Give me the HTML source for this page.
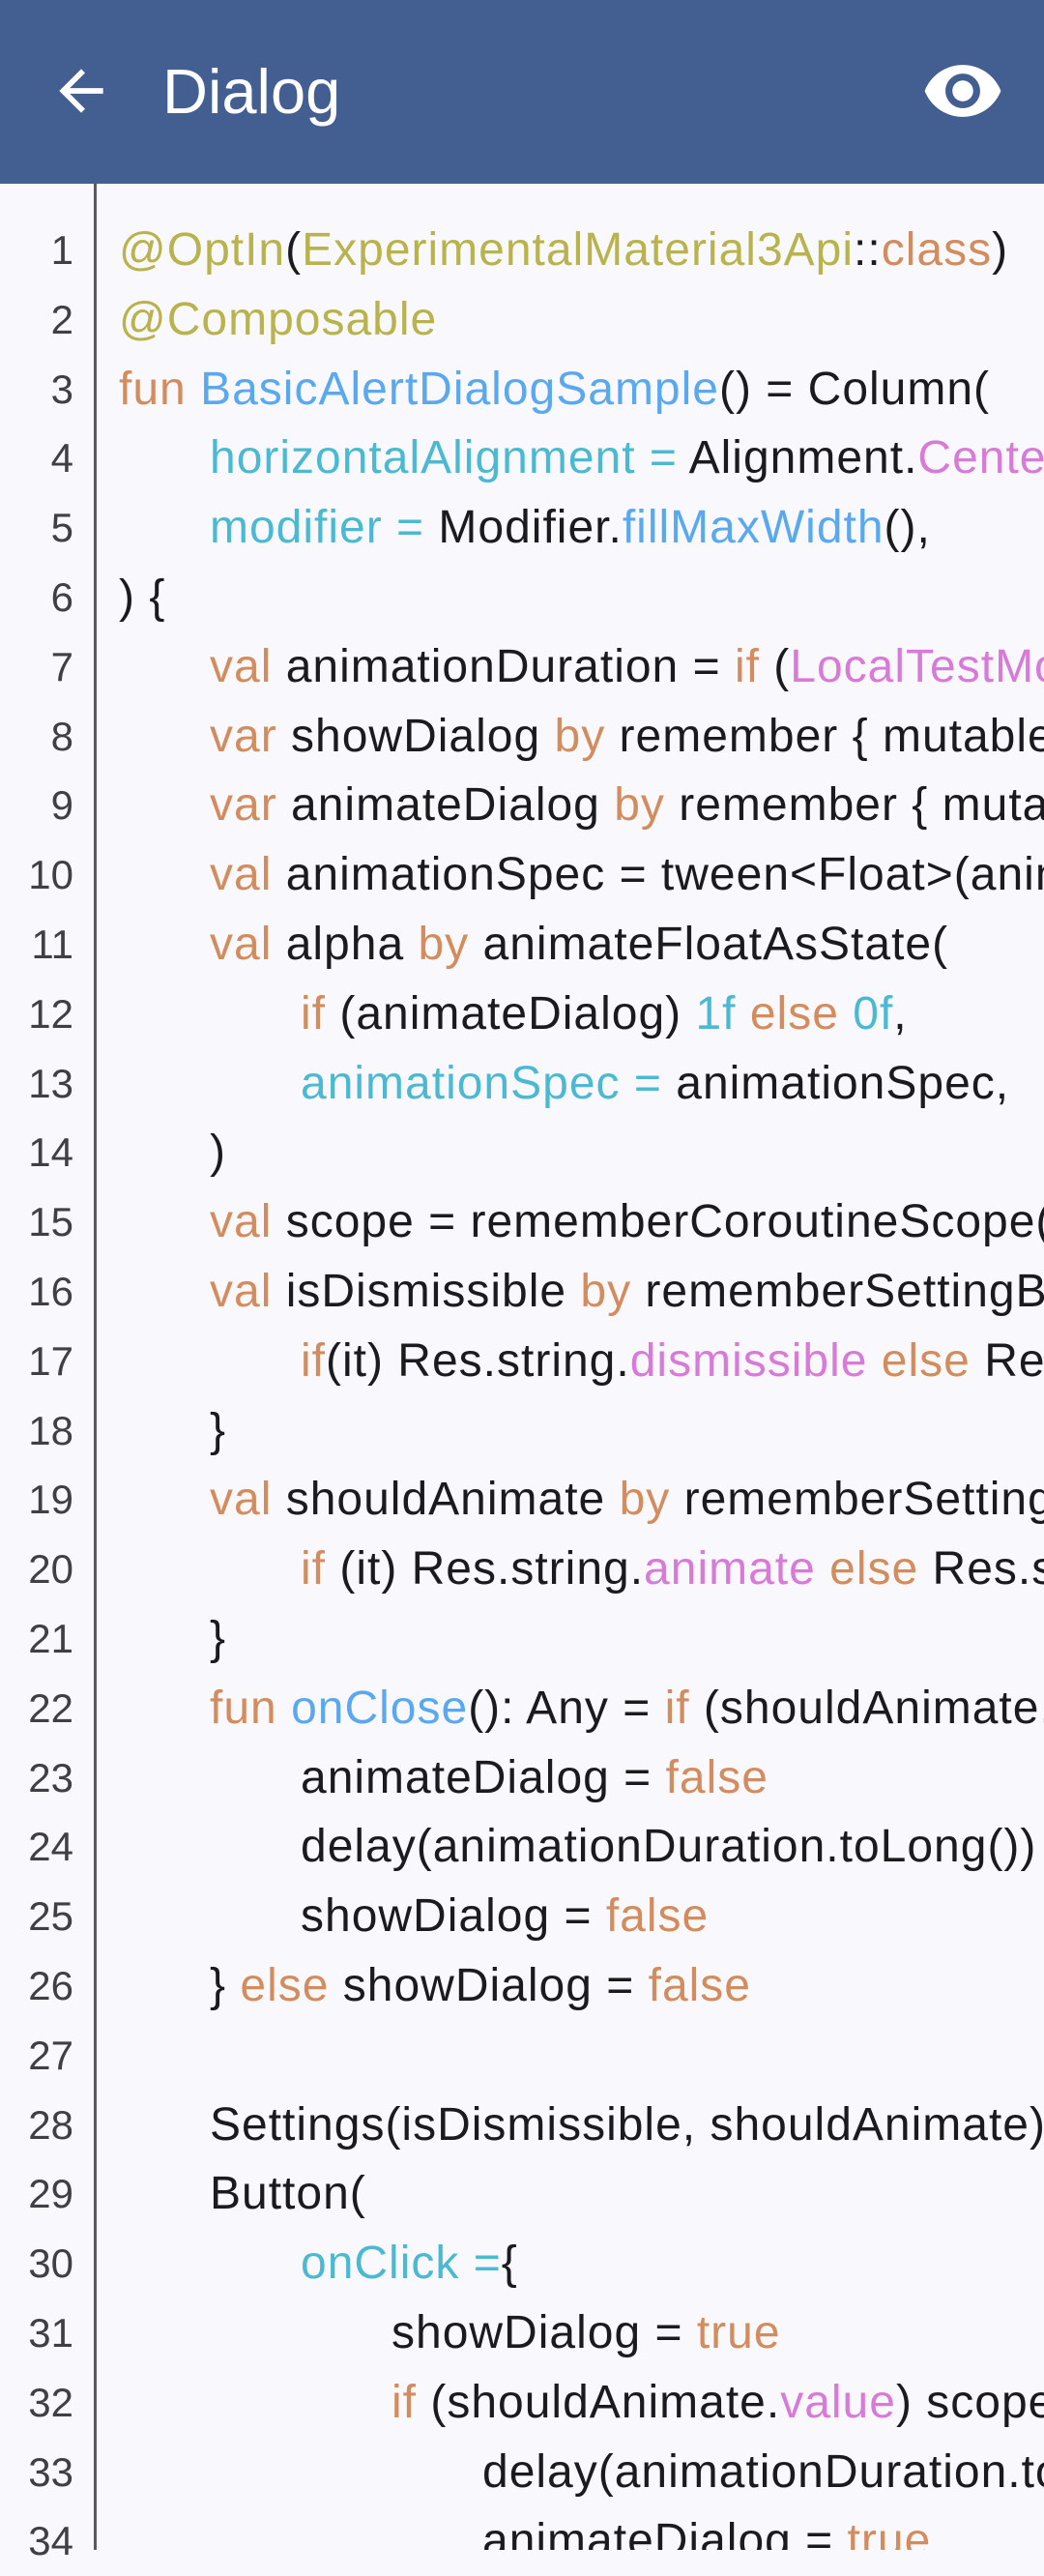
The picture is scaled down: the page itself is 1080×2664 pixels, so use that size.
<!DOCTYPE html>
<html><head><meta charset="utf-8"><style>
html,body{margin:0;padding:0;}
body{width:1080px;height:2637px;overflow:hidden;background:#f9f9fd;position:relative;font-family:"Liberation Sans",sans-serif;}
.bar{position:absolute;left:0;top:0;width:1080px;height:190px;background:#435e91;}
.title{position:absolute;left:168px;top:55px;font-size:65px;line-height:80px;color:#fff;}
.div{position:absolute;left:97px;top:190px;width:3px;height:2447px;background:#5a5a5e;}
.nums{position:absolute;left:0;top:223px;width:76px;text-align:right;font-size:42px;line-height:71.8px;color:#3f3f44;}
.code{position:absolute;left:123px;top:223px;width:957px;height:2414px;overflow:hidden;font-size:48px;letter-spacing:1px;line-height:71.8px;color:#1b1b1f;}
.code div{height:71.8px;white-space:pre;}
.i1{padding-left:94px}.i2{padding-left:188px}.i3{padding-left:282px}.i4{padding-left:376px}
.a{color:#b9b34e}.k{color:#d38c5d}.f{color:#5aa9f0}.p{color:#4cb9d2}.m{color:#d77ad8}.n{color:#4cb9d2}
</style></head><body>
<div class="bar">
<svg style="position:absolute;left:50px;top:60px" width="68" height="68" viewBox="0 0 24 24"><path d="M20 11H7.83l5.59-5.59L12 4l-8 8 8 8 1.41-1.41L7.83 13H20v-2z" fill="#fff"/></svg>
<div class="title">Dialog</div>
<svg style="position:absolute;left:953px;top:51px" width="86" height="86" viewBox="0 0 24 24"><path d="M12 4.5C7 4.5 2.73 7.61 1 12c1.73 4.39 6 7.5 11 7.5s9.27-3.11 11-7.5c-1.73-4.39-6-7.5-11-7.5zM12 17c-2.76 0-5-2.24-5-5s2.24-5 5-5 5 2.24 5 5-2.24 5-5 5zm0-8c-1.66 0-3 1.34-3 3s1.34 3 3 3 3-1.34 3-3-1.34-3-3-3z" fill="#fff"/></svg>
</div>
<div class="div"></div>
<div class="nums">1<br>2<br>3<br>4<br>5<br>6<br>7<br>8<br>9<br>10<br>11<br>12<br>13<br>14<br>15<br>16<br>17<br>18<br>19<br>20<br>21<br>22<br>23<br>24<br>25<br>26<br>27<br>28<br>29<br>30<br>31<br>32<br>33<br>34</div>
<div class="code"><div><span class="a">@OptIn</span>(<span class="a">ExperimentalMaterial3Api</span>::<span class="k">class</span>)</div><div><span class="a">@Composable</span></div><div><span class="k">fun</span> <span class="f">BasicAlertDialogSample</span>() = Column(</div><div class="i1"><span class="p">horizontalAlignment =</span> Alignment.<span class="m">CenterHorizontally</span>,</div><div class="i1"><span class="p">modifier =</span> Modifier.<span class="f">fillMaxWidth</span>(),</div><div>) {</div><div class="i1"><span class="k">val</span> animationDuration = <span class="k">if</span> (<span class="m">LocalTestMode</span>.current) 0 else 300</div><div class="i1"><span class="k">var</span> showDialog <span class="k">by</span> remember { mutableStateOf(false) }</div><div class="i1"><span class="k">var</span> animateDialog <span class="k">by</span> remember { mutableStateOf(false) }</div><div class="i1"><span class="k">val</span> animationSpec = tween&lt;Float&gt;(animationDuration)</div><div class="i1"><span class="k">val</span> alpha <span class="k">by</span> animateFloatAsState(</div><div class="i2"><span class="k">if</span> (animateDialog) <span class="n">1f</span> <span class="k">else</span> <span class="n">0f</span>,</div><div class="i2"><span class="p">animationSpec =</span> animationSpec,</div><div class="i1">)</div><div class="i1"><span class="k">val</span> scope = rememberCoroutineScope()</div><div class="i1"><span class="k">val</span> isDismissible <span class="k">by</span> rememberSettingBoolean(</div><div class="i2"><span class="k">if</span>(it) Res.string.<span class="m">dismissible</span> <span class="k">else</span> Res.string.</div><div class="i1">}</div><div class="i1"><span class="k">val</span> shouldAnimate <span class="k">by</span> rememberSettingBoolean(</div><div class="i2"><span class="k">if</span> (it) Res.string.<span class="m">animate</span> <span class="k">else</span> Res.string.</div><div class="i1">}</div><div class="i1"><span class="k">fun</span> <span class="f">onClose</span>(): Any = <span class="k">if</span> (shouldAnimate.value)</div><div class="i2">animateDialog = <span class="k">false</span></div><div class="i2">delay(animationDuration.toLong())</div><div class="i2">showDialog = <span class="k">false</span></div><div class="i1">} <span class="k">else</span> showDialog = <span class="k">false</span></div><div> </div><div class="i1">Settings(isDismissible, shouldAnimate)</div><div class="i1">Button(</div><div class="i2"><span class="p">onClick =</span>{</div><div class="i3">showDialog = <span class="k">true</span></div><div class="i3"><span class="k">if</span> (shouldAnimate.<span class="m">value</span>) scope.launch {</div><div class="i4">delay(animationDuration.toLong())</div><div class="i4">animateDialog = <span class="k">true</span></div></div>
</body></html>
